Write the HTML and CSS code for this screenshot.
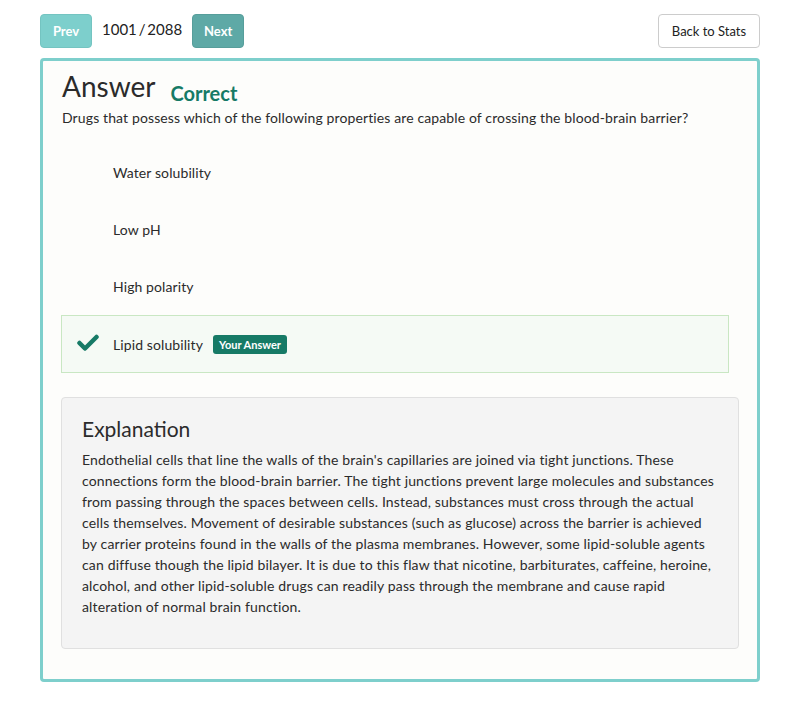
FILE: index.html
```html
<!DOCTYPE html>
<html>
<head>
<meta charset="utf-8">
<link rel="stylesheet" href="styles.css">
</head>
<body>
<div class="page">
  <div class="topbar">
    <div class="nav">
      <button class="btn btn-prev">Prev</button>
      <span class="count">1001&thinsp;/&thinsp;2088</span>
      <button class="btn btn-next">Next</button>
    </div>
    <button class="btn-back">Back to Stats</button>
  </div>
  <div class="card">
    <div class="title-row">
      <h1 class="title">Answer</h1>
      <span class="status">Correct</span>
    </div>
    <p class="question">Drugs that possess which of the following properties are capable of crossing the blood-brain barrier?</p>
    <ul class="options">
      <li class="option"><span class="opt-text">Water solubility</span></li>
      <li class="option"><span class="opt-text">Low pH</span></li>
      <li class="option"><span class="opt-text">High polarity</span></li>
      <li class="option option-correct">
        <svg class="check" viewBox="0 0 22 17" width="22" height="17"><path d="M2.5 9 L8 14.5 L19.5 3" fill="none" stroke="#167a66" stroke-width="4.5" stroke-linecap="round" stroke-linejoin="round"/></svg>
        <span class="opt-text">Lipid solubility</span>
        <span class="badge">Your Answer</span>
      </li>
    </ul>
    <div class="explanation">
      <h2 class="exp-title">Explanation</h2>
      <p class="exp-text">Endothelial cells that line the walls of the brain's capillaries are joined via tight junctions. These connections form the blood-brain barrier. The tight junctions prevent large molecules and substances from passing through the spaces between cells. Instead, substances must cross through the actual cells themselves. Movement of desirable substances (such as glucose) across the barrier is achieved by carrier proteins found in the walls of the plasma membranes. However, some lipid-soluble agents can diffuse though the lipid bilayer. It is due to this flaw that nicotine, barbiturates, caffeine, heroine, alcohol, and other lipid-soluble drugs can readily pass through the membrane and cause rapid alteration of normal brain function.</p>
    </div>
  </div>
</div>
</body>
</html>
```

FILE: styles.css
```css
* { box-sizing: border-box; }
body {
  margin: 0;
  background: #ffffff;
  font-family: Lato, "Open Sans", sans-serif;
  color: #2b2b2b;
}
.page {
  padding: 14px 40px 0 40px;
}
.topbar {
  display: flex;
  justify-content: space-between;
  align-items: center;
  height: 34px;
  margin-bottom: 10px;
}
.nav {
  display: flex;
  align-items: center;
}
.btn {
  height: 34px;
  width: 52px;
  border: 1px solid transparent;
  border-radius: 4px;
  color: #fff;
  font-family: Lato, sans-serif;
  font-weight: 700;
  font-size: 13px;
  padding: 0;
}
.btn-prev { background: #7dcfcc; border-color: #74c4c1; }
.btn-next { background: #5ea9a6; border-color: #579e9b; }
.count {
  font-size: 15px;
  margin: 0 10px;
  color: #222;
  position: relative;
  top: -2px;
}
.btn-back {
  height: 34px;
  width: 102px;
  background: #fff;
  border: 1px solid #cccccc;
  border-radius: 4px;
  font-family: Lato, sans-serif;
  font-size: 13px;
  color: #222;
  padding: 0;
}
.card {
  border: 3px solid #7ecfcc;
  border-radius: 4px;
  background: #fdfdfb;
  padding: 8px 18px 32px 18px;
  height: 624px;
}
.title-row {
  display: flex;
  align-items: baseline;
  height: 35px;
}
.title {
  margin: 0 0 0 1px;
  font-size: 28px;
  font-weight: 400;
  color: #2b2b2b;
  line-height: 35px;
}
.status {
  margin-left: 15px;
  font-size: 20px;
  font-weight: 700;
  color: #167a66;
  position: relative;
  top: 4px;
}
.question {
  margin: 4px 0 0 1px;
  font-size: 14px;
  line-height: 20px;
  letter-spacing: 0.12px;
}
.options {
  list-style: none;
  margin: 16px 10px 0 0;
  padding: 0;
}
.option {
  display: flex;
  align-items: center;
  height: 57px;
  padding-left: 51px;
  font-size: 14px;
  letter-spacing: 0.1px;
  border: 1px solid transparent;
}
.option-correct {
  background: #f5faf5;
  border-color: #c9e7c3;
  padding-left: 15px;
  height: 58px;
}
.check { margin-right: 14px; margin-top: -3px; }
.badge {
  margin-left: 10px;
  background: #167a66;
  color: #fff;
  font-size: 11px;
  font-weight: 700;
  letter-spacing: 0;
  padding: 3px 6px;
  border-radius: 3px;
  line-height: 13px;
}
.explanation {
  margin-top: 24px;
  background: #f4f4f4;
  border: 1px solid #e0e0e0;
  border-radius: 4px;
  padding: 16px 20px 20px 20px;
  height: 252px;
}
.exp-title {
  margin: 0;
  font-size: 21px;
  font-weight: 400;
  line-height: 30px;
  color: #2b2b2b;
}
.exp-text {
  margin: 5px 0 0 0;
  font-size: 14px;
  line-height: 21px;
  letter-spacing: 0.15px;
}
```
